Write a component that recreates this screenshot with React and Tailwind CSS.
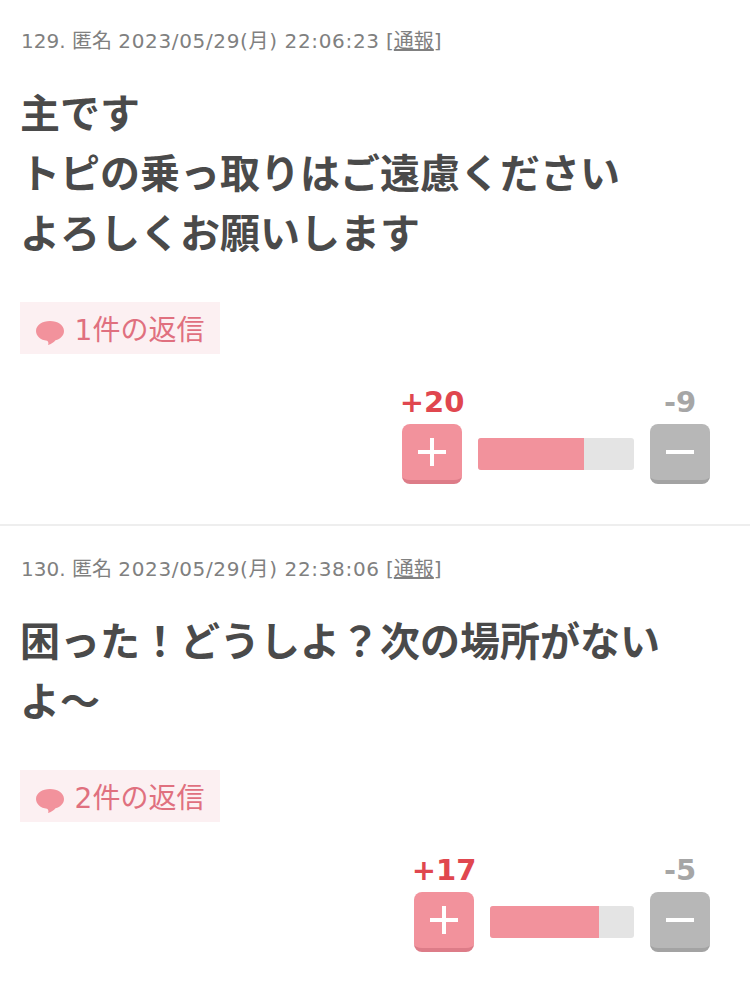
const font = "font-['DejaVu_Sans','Noto_Sans_CJK_JP',sans-serif]";

const comments = [
    {
        no: 129,
        date: '2023/05/29(月) 22:06:23',
        lines: ['主です', 'トピの乗っ取りはご遠慮ください', 'よろしくお願いします'],
        replies: 1,
        plus: 20,
        minus: 9,
        rate: 68,
        barWidth: 'w-[156px]',
    },
    {
        no: 130,
        date: '2023/05/29(月) 22:38:06',
        lines: ['困った！どうしよ？次の場所がない', 'よ〜'],
        replies: 2,
        plus: 17,
        minus: 5,
        rate: 75.7,
        barWidth: 'w-[144px]',
    },
];

function Comment({ c }) {
    return (
        <section className="border-b-2 border-[#eeeeee] px-5 pt-[30px] pb-10 first:pt-7 last:border-b-0">
            <p className="pl-px text-[20px] leading-[26px] text-[#808080]">
                {c.no}. 匿名 <span className="tracking-[0.65px]">{c.date}</span> [<span className="underline">通報</span>]
            </p>

            <div className="mt-[30px] text-[40px] leading-[60px] font-bold text-[#4a4a4a]">
                {c.lines.map((line) => (
                    <p key={line}>{line}</p>
                ))}
            </div>

            <div className="mt-[38px] flex h-[52px] w-[200px] items-center justify-center gap-[11px] bg-[#fcf0f2] pt-[6px] text-[28px] text-[#e0707f]">
                <svg viewBox="0 0 28 26" className="mt-1 h-[26px] w-[28px] fill-[#f2929c]">
                    <path d="M14 1C6.300 1 0 5 0 11c0 5 4.500 9 11 9.800 1 .1 2 2.200 1 4.200 3-.8 6-3 7.500-4.800C24.500 19 28 15.500 28 11 28 5 21.700 1 14 1z" />
                </svg>
                <span className="leading-none">{c.replies}件の返信</span>
            </div>

            <div className="mt-[26px] mr-5 flex items-end justify-end gap-4">
                <div className="flex w-[60px] flex-col items-center">
                    <span className="text-[29px] leading-[44px] font-bold whitespace-nowrap text-[#e0474f]">+{c.plus}</span>
                    <button className="flex h-[60px] w-[60px] shrink-0 items-center justify-center rounded-lg border-b-4 border-[#dd7c88] bg-[#f2929c]">
                        <svg viewBox="0 0 30 30" className="h-[30px] w-[30px] stroke-white stroke-[4]">
                            <path d="M1 15h28M15 1v28" />
                        </svg>
                    </button>
                </div>
                <div className={`mb-[14px] h-8 ${c.barWidth} overflow-hidden rounded-[3px] bg-[#e4e4e4]`}>
                    <div className="h-full bg-[#f2929c]" style={{ width: `${c.rate}%` }} />
                </div>
                <div className="flex w-[60px] flex-col items-center">
                    <span className="text-[29px] leading-[44px] font-bold whitespace-nowrap text-[#a6a6a6]">-{c.minus}</span>
                    <button className="flex h-[60px] w-[60px] shrink-0 items-center justify-center rounded-lg border-b-4 border-[#a3a3a3] bg-[#b7b7b7]">
                        <svg viewBox="0 0 30 30" className="h-[30px] w-[30px] stroke-white stroke-[4]">
                            <path d="M1 15h28" />
                        </svg>
                    </button>
                </div>
            </div>
        </section>
    );
}

export default function App() {
    return (
        <div className={`${font} min-h-[989px] overflow-hidden bg-white`}>
            {comments.map((c) => (
                <Comment key={c.no} c={c} />
            ))}
        </div>
    );
}
